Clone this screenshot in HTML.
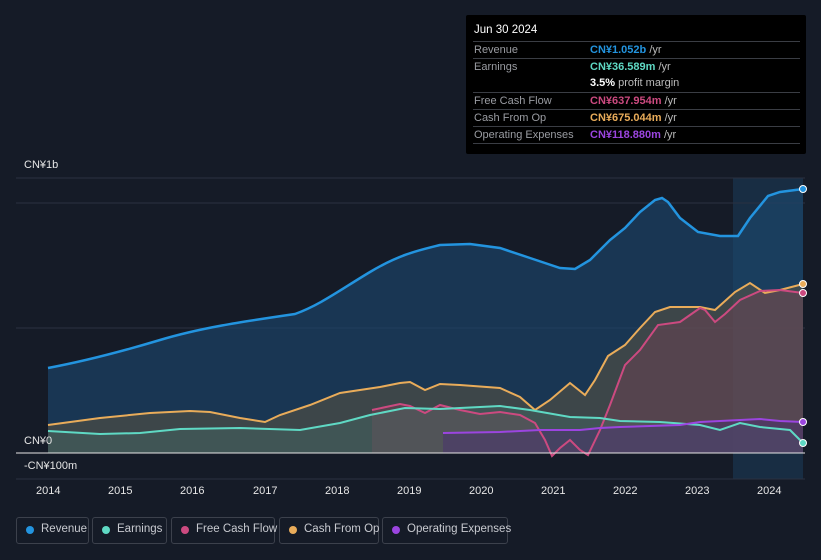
<!DOCTYPE html>
<html><head><meta charset="utf-8"><style>
body{margin:0;background:#151b27;width:821px;height:560px;overflow:hidden;font-family:"Liberation Sans",sans-serif;position:relative}
span{white-space:nowrap}
.tt{position:absolute;left:466px;top:15px;width:340px;height:139px;background:#000;border-radius:2px;color:#fff;font-size:11px}
.tt .h{position:absolute;left:8px;top:9px;font-size:11.5px}
.row{position:absolute;left:7px;width:327px;border-top:1px solid #3a3d44;height:17px}
.row span{position:absolute;top:2px}
.row span span{position:static}
.l{left:1px;color:#9a9ca2}.v{left:117px;font-weight:bold}.u{color:#bbb;font-weight:normal}
.ax{position:absolute;color:#e6e6e6;font-size:11px;white-space:nowrap}
.lg{position:absolute;top:517px;height:27px;border:1px solid #3c414c;border-radius:3px;color:#c8cad0;font-size:11.5px;box-sizing:border-box}
.lg i{position:absolute;left:9px;top:8px;width:8px;height:8px;border-radius:50%}
.lg span{position:absolute;left:24px;top:5px}
</style></head><body>
<svg width="821" height="560" style="position:absolute;left:0;top:0">
<rect x="733" y="178" width="70" height="301" fill="#1a3550" opacity="0.7"/>
<line x1="16" y1="178" x2="805" y2="178" stroke="#2a3140"/>
<line x1="16" y1="203" x2="805" y2="203" stroke="#2a3140"/>
<line x1="16" y1="328" x2="805" y2="328" stroke="#2a3140"/>
<line x1="16" y1="479" x2="805" y2="479" stroke="#2a3140"/>
<path d="M48,453 L48,368 C80,362 120,352 160,340 S240,322 295,314 C320,305 340,290 370,272 S420,250 440,245 L470,244 500,248 530,258 560,268 575,269 590,260 610,240 625,228 640,212 655,200 662,198 668,202 680,218 698,232 720,236 738,236 750,218 768,196 780,192 803,189 L803,453Z" fill="#1c4a72" opacity="0.6"/>
<path d="M48,368 C80,362 120,352 160,340 S240,322 295,314 C320,305 340,290 370,272 S420,250 440,245 L470,244 500,248 530,258 560,268 575,269 590,260 610,240 625,228 640,212 655,200 662,198 668,202 680,218 698,232 720,236 738,236 750,218 768,196 780,192 803,189" fill="none" stroke="#2394df" stroke-width="2.5"/>
<path d="M48,453 L48,425 100,418 150,413 190,411 210,412 240,418 265,422 280,415 310,405 340,393 380,387 400,383 410,382 425,390 440,384 460,385 500,388 520,397 535,410 550,400 570,383 585,395 595,380 608,356 625,345 640,328 655,312 670,307 700,307 715,310 735,292 750,283 765,293 780,290 803,284 L803,453Z" fill="#6b5a3e" opacity="0.45"/>
<path d="M372,453 L372,410 400,404 410,406 425,413 440,405 460,410 480,414 500,412 520,415 535,423 545,440 552,456 560,448 570,440 580,450 588,455 600,430 610,405 625,365 640,350 658,325 680,322 690,315 700,308 705,310 715,322 725,314 740,300 760,291 780,290 803,293 L803,453Z" fill="#7a4058" opacity="0.4"/>
<path d="M48,453 L48,431 100,434 140,433 180,429 240,428 300,430 340,423 370,415 405,408 440,409 480,407 500,406 530,410 570,417 600,418 620,421 660,422 700,425 720,430 740,423 760,427 790,430 803,443 L803,453Z" fill="#4a7a72" opacity="0.3"/>
<path d="M443,453 L443,433 500,432 540,430 580,430 600,428 620,427 680,425 700,422 740,420 760,419 780,421 803,422 L803,453Z" fill="#4a3070" opacity="0.5"/>
<path d="M48,425 100,418 150,413 190,411 210,412 240,418 265,422 280,415 310,405 340,393 380,387 400,383 410,382 425,390 440,384 460,385 500,388 520,397 535,410 550,400 570,383 585,395 595,380 608,356 625,345 640,328 655,312 670,307 700,307 715,310 735,292 750,283 765,293 780,290 803,284" fill="none" stroke="#e9ac5a" stroke-width="2"/>
<path d="M372,410 400,404 410,406 425,413 440,405 460,410 480,414 500,412 520,415 535,423 545,440 552,456 560,448 570,440 580,450 588,455 600,430 610,405 625,365 640,350 658,325 680,322 690,315 700,308 705,310 715,322 725,314 740,300 760,291 780,290 803,293" fill="none" stroke="#cc4a80" stroke-width="2"/>
<path d="M48,431 100,434 140,433 180,429 240,428 300,430 340,423 370,415 405,408 440,409 480,407 500,406 530,410 570,417 600,418 620,421 660,422 700,425 720,430 740,423 760,427 790,430 803,443" fill="none" stroke="#5fd9c4" stroke-width="2"/>
<path d="M443,433 500,432 540,430 580,430 600,428 620,427 680,425 700,422 740,420 760,419 780,421 803,422" fill="none" stroke="#9b45e0" stroke-width="2"/>
<line x1="16" y1="453" x2="805" y2="453" stroke="#e6e6e6" stroke-width="1"/>
<circle cx="803" cy="189" r="3.5" fill="#2394df" stroke="#fff"/>
<circle cx="803" cy="284" r="3.5" fill="#e9ac5a" stroke="#fff"/>
<circle cx="803" cy="293" r="3.5" fill="#cc4a80" stroke="#fff"/>
<circle cx="803" cy="422" r="3.5" fill="#9b45e0" stroke="#fff"/>
<circle cx="803" cy="443" r="3.5" fill="#5fd9c4" stroke="#fff"/>
</svg>
<div class="ax" style="left:24px;top:159px">CN¥1b</div>
<div class="ax" style="left:24px;top:435px">CN¥0</div>
<div class="ax" style="left:24px;top:460px">-CN¥100m</div>
<div class="ax" style="left:36px;top:485px">2014</div>
<div class="ax" style="left:108px;top:485px">2015</div>
<div class="ax" style="left:180px;top:485px">2016</div>
<div class="ax" style="left:253px;top:485px">2017</div>
<div class="ax" style="left:325px;top:485px">2018</div>
<div class="ax" style="left:397px;top:485px">2019</div>
<div class="ax" style="left:469px;top:485px">2020</div>
<div class="ax" style="left:541px;top:485px">2021</div>
<div class="ax" style="left:613px;top:485px">2022</div>
<div class="ax" style="left:685px;top:485px">2023</div>
<div class="ax" style="left:757px;top:485px">2024</div>
<div class="tt">
<div class="h">Jun 30 2024</div>
<div class="row" style="top:26px"><span class="l">Revenue</span><span class="v" style="color:#2394df">CN¥1.052b <span class="u">/yr</span></span></div>
<div class="row" style="top:43px"><span class="l">Earnings</span><span class="v" style="color:#5fd9c4">CN¥36.589m <span class="u">/yr</span></span></div>
<div class="row" style="top:60px;border:none"><span class="v" style="color:#fff">3.5% <span class="u">profit margin</span></span></div>
<div class="row" style="top:77px"><span class="l">Free Cash Flow</span><span class="v" style="color:#cc4a80">CN¥637.954m <span class="u">/yr</span></span></div>
<div class="row" style="top:94px"><span class="l">Cash From Op</span><span class="v" style="color:#e9ac5a">CN¥675.044m <span class="u">/yr</span></span></div>
<div class="row" style="top:111px"><span class="l">Operating Expenses</span><span class="v" style="color:#9b45e0">CN¥118.880m <span class="u">/yr</span></span></div>
<div class="row" style="top:128px;height:0"></div>
</div>
<div class="lg" style="left:16px;width:73px"><i style="background:#2394df"></i><span>Revenue</span></div>
<div class="lg" style="left:92px;width:75px"><i style="background:#5fd9c4"></i><span>Earnings</span></div>
<div class="lg" style="left:171px;width:104px"><i style="background:#cc4a80"></i><span>Free Cash Flow</span></div>
<div class="lg" style="left:279px;width:100px"><i style="background:#e9ac5a"></i><span>Cash From Op</span></div>
<div class="lg" style="left:382px;width:126px"><i style="background:#9b45e0"></i><span>Operating Expenses</span></div>
</body></html>
